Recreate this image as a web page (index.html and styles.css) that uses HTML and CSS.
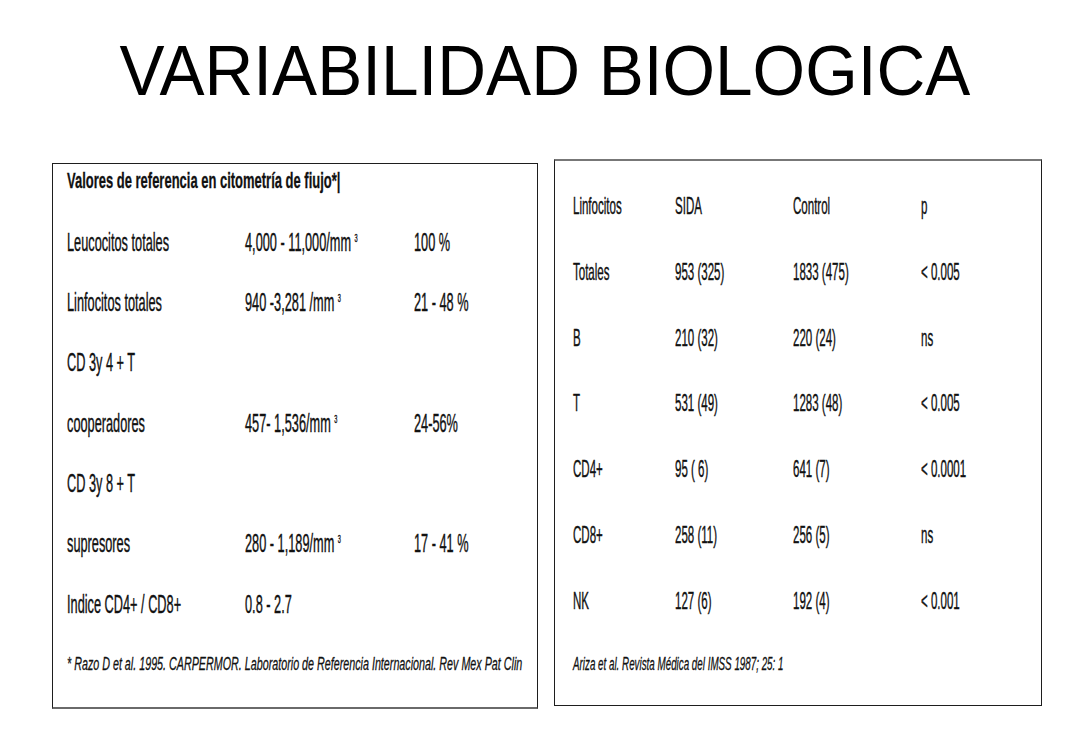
FILE: index.html
```html
<!DOCTYPE html>
<html lang="es">
<head>
<meta charset="utf-8">
<title>Variabilidad biológica</title>
<link rel="stylesheet" href="styles.css">
</head>
<body>
<div class="slide">
  <h1 class="title"><span class="title-text">VARIABILIDAD BIOLOGICA</span></h1>
  <div class="panels">
    <section class="box box-left">
      <div class="head"><span class="sq sq-head">Valores de referencia en citometría de fiujo*|</span></div>
      <div class="grid-left">
        <div class="cell"><span class="sq">Leucocitos totales</span></div>
        <div class="cell"><span class="sq">4,000 - 11,000/mm <sup>3</sup></span></div>
        <div class="cell"><span class="sq">100 %</span></div>

        <div class="cell"><span class="sq">Linfocitos totales</span></div>
        <div class="cell"><span class="sq">940 -3,281 /mm <sup>3</sup></span></div>
        <div class="cell"><span class="sq">21 - 48 %</span></div>

        <div class="cell"><span class="sq">CD 3y 4 + T</span></div>
        <div class="cell"></div>
        <div class="cell"></div>

        <div class="cell"><span class="sq">cooperadores</span></div>
        <div class="cell"><span class="sq">457- 1,536/mm <sup>3</sup></span></div>
        <div class="cell"><span class="sq">24-56%</span></div>

        <div class="cell"><span class="sq">CD 3y 8 + T</span></div>
        <div class="cell"></div>
        <div class="cell"></div>

        <div class="cell"><span class="sq">supresores</span></div>
        <div class="cell"><span class="sq">280 - 1,189/mm <sup>3</sup></span></div>
        <div class="cell"><span class="sq">17 - 41 %</span></div>

        <div class="cell"><span class="sq">Indice CD4+ / CD8+</span></div>
        <div class="cell"><span class="sq">0.8 - 2.7</span></div>
        <div class="cell"></div>
      </div>
      <p class="note note-left"><span class="sq sq-note">* Razo D et al. 1995. CARPERMOR. Laboratorio de Referencia Internacional. Rev Mex Pat Clin</span></p>
    </section>

    <section class="box box-right">
      <div class="grid-right">
        <div class="cell"><span class="sq">Linfocitos</span></div>
        <div class="cell"><span class="sq">SIDA</span></div>
        <div class="cell"><span class="sq">Control</span></div>
        <div class="cell"><span class="sq">p</span></div>

        <div class="cell"><span class="sq">Totales</span></div>
        <div class="cell"><span class="sq">953 (325)</span></div>
        <div class="cell"><span class="sq">1833 (475)</span></div>
        <div class="cell"><span class="sq">&lt; 0.005</span></div>

        <div class="cell"><span class="sq">B</span></div>
        <div class="cell"><span class="sq">210 (32)</span></div>
        <div class="cell"><span class="sq">220 (24)</span></div>
        <div class="cell"><span class="sq">ns</span></div>

        <div class="cell"><span class="sq">T</span></div>
        <div class="cell"><span class="sq">531 (49)</span></div>
        <div class="cell"><span class="sq">1283 (48)</span></div>
        <div class="cell"><span class="sq">&lt; 0.005</span></div>

        <div class="cell"><span class="sq">CD4+</span></div>
        <div class="cell"><span class="sq">95 ( 6)</span></div>
        <div class="cell"><span class="sq">641 (7)</span></div>
        <div class="cell"><span class="sq">&lt; 0.0001</span></div>

        <div class="cell"><span class="sq">CD8+</span></div>
        <div class="cell"><span class="sq">258 (11)</span></div>
        <div class="cell"><span class="sq">256 (5)</span></div>
        <div class="cell"><span class="sq">ns</span></div>

        <div class="cell"><span class="sq">NK</span></div>
        <div class="cell"><span class="sq">127 (6)</span></div>
        <div class="cell"><span class="sq">192 (4)</span></div>
        <div class="cell"><span class="sq">&lt; 0.001</span></div>
      </div>
      <p class="note note-right"><span class="sq sq-note">Ariza et al. Revista Médica del IMSS 1987; 25: 1</span></p>
    </section>
  </div>
</div>
</body>
</html>
```

FILE: styles.css
```css
html, body {
  margin: 0;
  padding: 0;
  background: #ffffff;
}

body {
  font-family: "Liberation Sans", Arial, sans-serif;
  color: #111111;
}

.slide {
  width: 1089px;
  height: 742px;
  overflow: hidden;
}

.title {
  margin: 0;
  padding-top: 31px;
  height: 80px;
  line-height: 80px;
  font-size: 70px;
  font-weight: normal;
  text-align: center;
  color: #000000;
}

.title-text {
  display: inline-block;
  transform: scaleX(0.965);
  transform-origin: 50% 50%;
  white-space: nowrap;
}

.panels {
  display: flex;
  align-items: flex-start;
  gap: 16px;
  padding-left: 52px;
  margin-top: 48px;
}

.box {
  box-sizing: border-box;
  border: 1px solid #1e1e1e;
  background: #ffffff;
  overflow: hidden;
}

.box-left {
  width: 486px;
  height: 546px;
  margin-top: 4px;
  padding-left: 14px;
  border-bottom: 2px solid #6a6a6a;
}

.box-right {
  width: 488px;
  height: 547px;
  padding-left: 18px;
  padding-top: 12px;
  border-top: 2px solid #777777;
}

.sq {
  display: inline-block;
  white-space: nowrap;
  transform-origin: 0 50%;
  -webkit-text-stroke: 0.4px #111111;
}

.cell {
  white-space: nowrap;
  overflow: visible;
}

/* left table */
.head {
  height: 34px;
  line-height: 34px;
  margin-bottom: 13.5px;
  font-size: 22px;
  font-weight: bold;
}

.grid-left .sq {
  transform: scaleX(0.51);
}

.head .sq-head {
  transform: scaleX(0.59);
  -webkit-text-stroke: 0.3px #111111;
}

.grid-left {
  display: grid;
  grid-template-columns: 178px 169px 1fr;
  grid-auto-rows: 60.4px;
  line-height: 60.4px;
  font-size: 25px;
}

sup {
  font-size: 11px;
  vertical-align: 0;
  position: relative;
  top: -9px;
  line-height: 0;
  -webkit-text-stroke: 0.4px #111111;
}

.note {
  margin: 0;
  font-style: italic;
  white-space: nowrap;
}

.note-left {
  margin-top: 10px;
  line-height: 40px;
  font-size: 19px;
}

.note-left .sq-note {
  transform: scaleX(0.565);
  -webkit-text-stroke: 0.3px #111111;
}

/* right table */
.grid-right {
  display: grid;
  grid-template-columns: 102px 118px 128px 1fr;
  grid-auto-rows: 65.8px;
  line-height: 65.8px;
  font-size: 24px;
}

.grid-right .sq {
  transform: scaleX(0.48);
}

.note-right {
  margin-top: 15px;
  line-height: 30px;
  font-size: 18px;
}

.note-right .sq-note {
  transform: scaleX(0.545);
  -webkit-text-stroke: 0.3px #111111;
}
```
